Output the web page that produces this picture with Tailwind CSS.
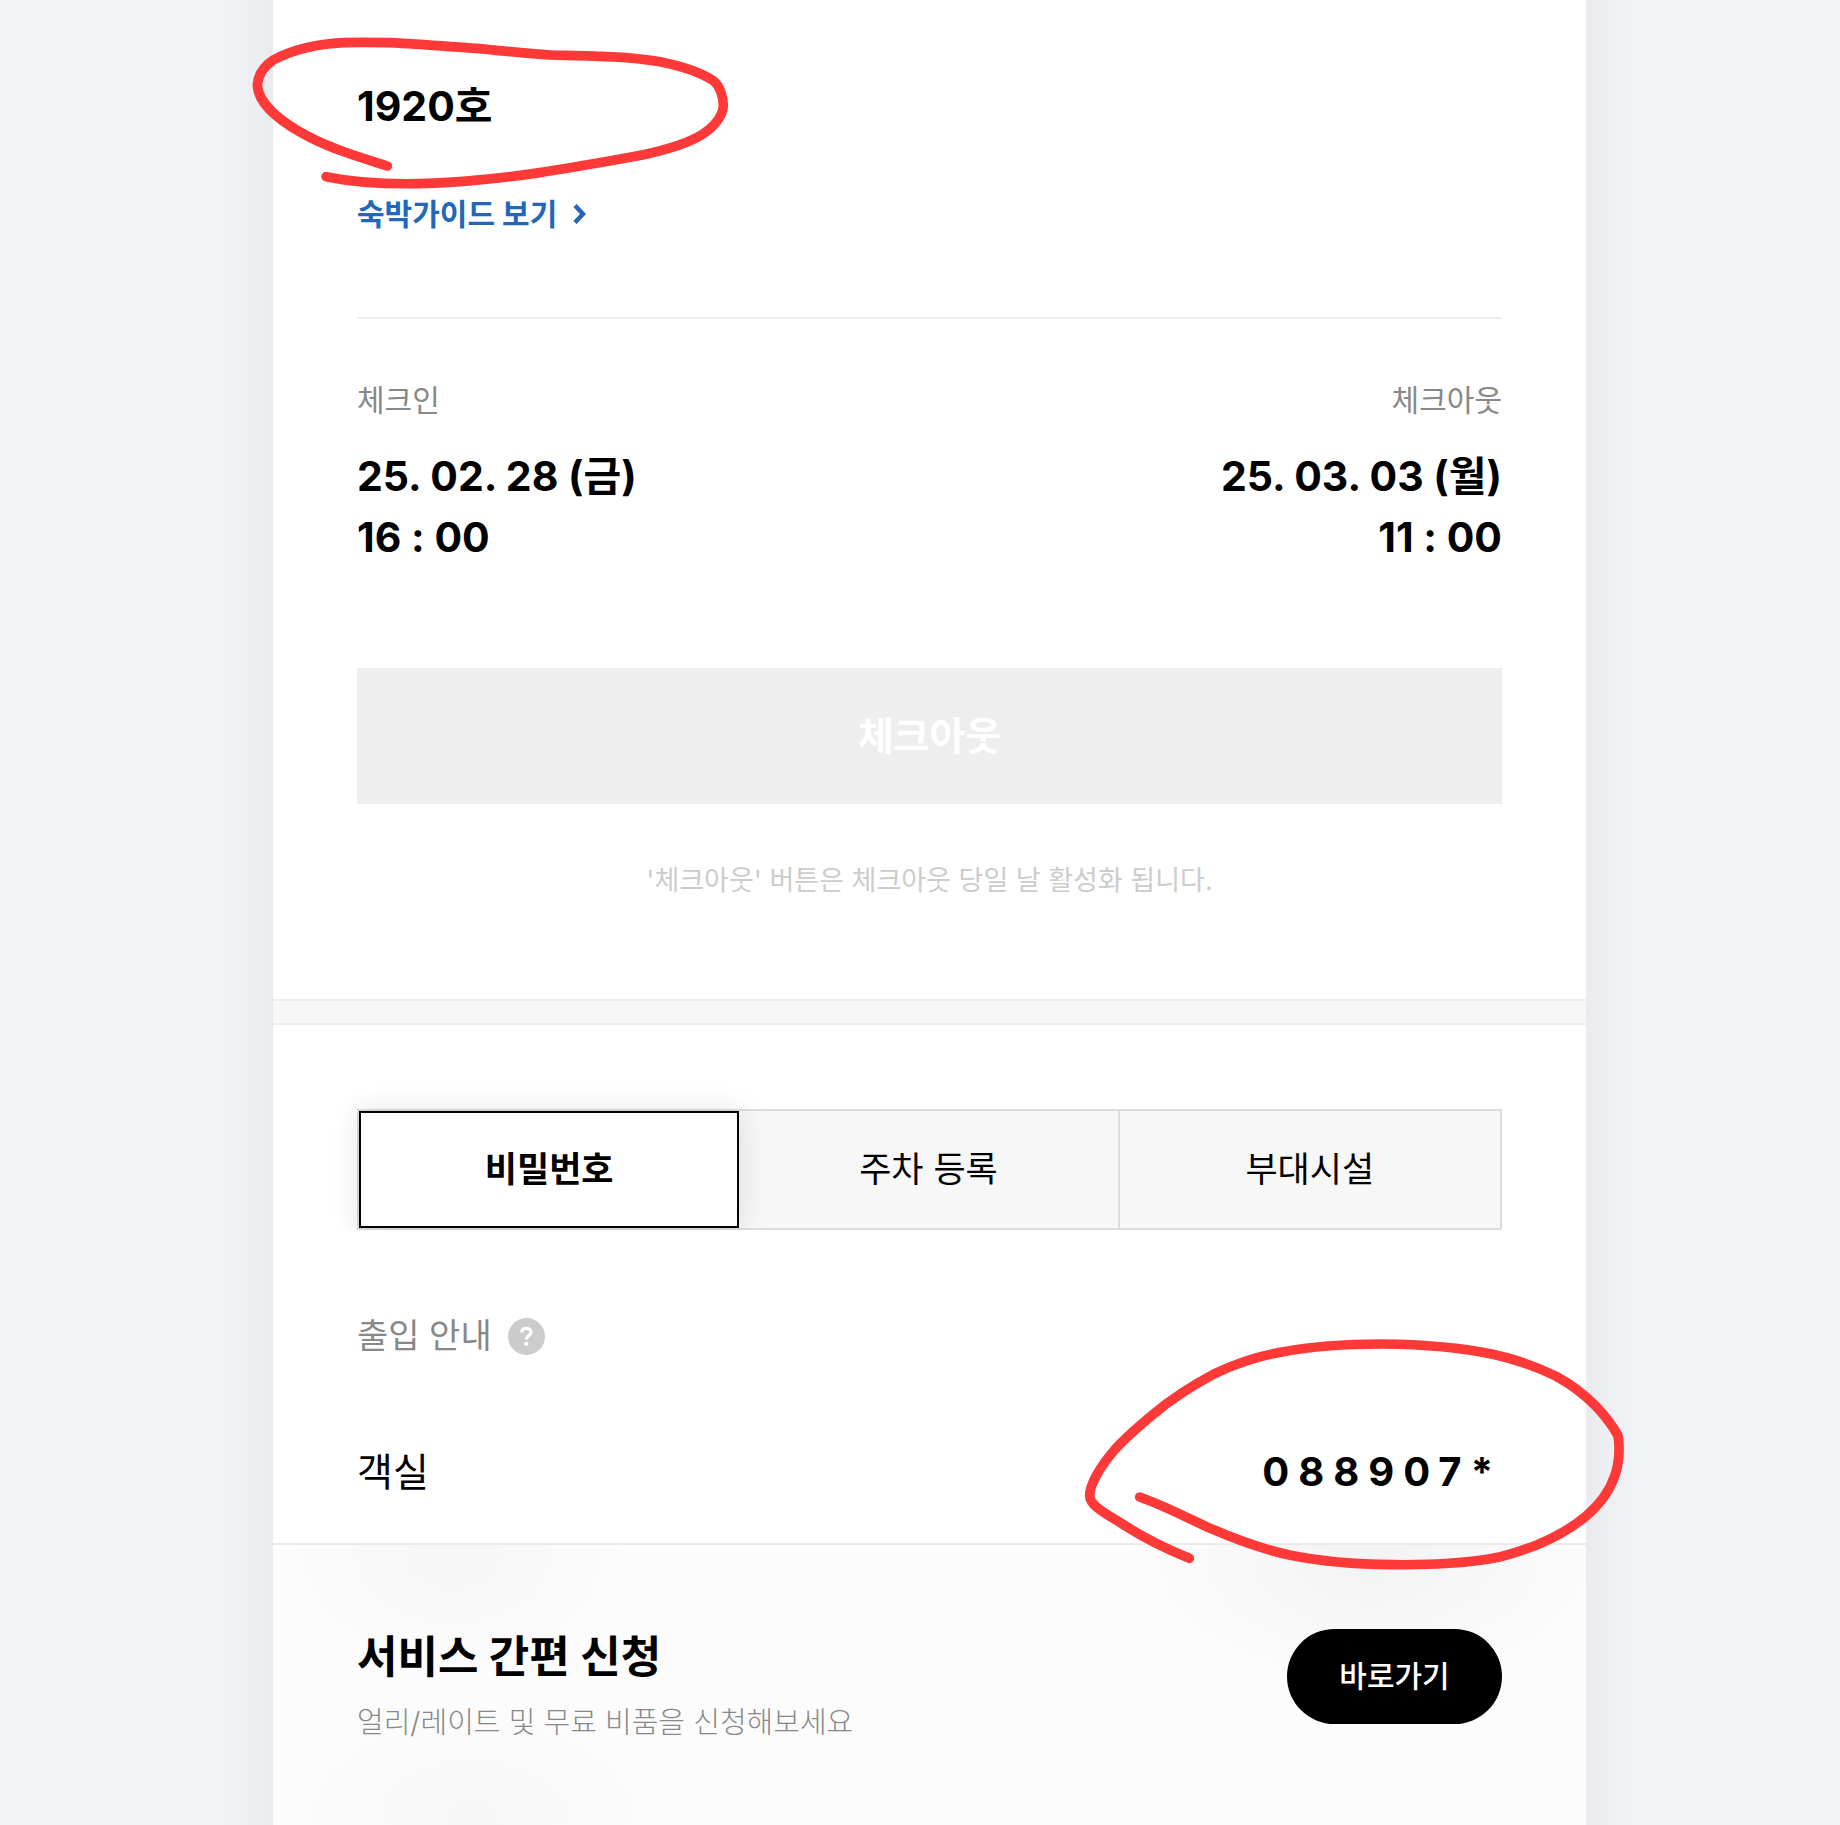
<!DOCTYPE html>
<html lang="ko">
<head>
    <meta charset="UTF-8" />
    <meta name="viewport" content="width=device-width, initial-scale=1" />
    <title>숙박 안내</title>
    <script src="https://cdn.jsdelivr.net/npm/@tailwindcss/browser@4"></script>
    <style>
        body {
            font-family: 'Inter', 'Noto Sans CJK KR', sans-serif;
            font-feature-settings: 'calt' 0;
        }
    </style>
</head>
<body class="bg-[#f1f3f7] text-black">

<div class="min-h-screen flex flex-col overflow-hidden">
<!-- runs past the window top and bottom so that the side shadow does not fade -->
<main class="relative flex-grow flex flex-col -my-20 pt-20 ml-[273px] mr-[254px] bg-white shadow-[0_0_60px_rgba(0,0,0,0.07)]">

    <!-- room and stay -->
    <section class="px-[84px] pt-[76px] pb-[98px]">
        <h1 class="text-[41px] leading-[60px] font-bold">1920호</h1>
        <a href="#guide" class="mt-14 flex w-fit items-center gap-4 text-[30px] leading-[44px] font-bold text-[#2267b9]">
            숙박가이드 보기
            <svg class="w-[13px] h-[20px]" viewBox="0 0 13 20" fill="none" stroke="currentColor" stroke-width="4.5" aria-hidden="true">
                <path d="M2 1.5 10 10 2 18.5" />
            </svg>
        </a>

        <hr class="mt-[81px] border-0 h-[2px] bg-[#eeeeee]" />

        <div class="mt-[59px] flex justify-between">
            <div>
                <p class="text-[30px] leading-[44px] text-[#888888]">체크인</p>
                <p class="mt-6 text-[41px] leading-[61px] font-bold">25. 02. 28 (금)<br />16 : 00</p>
            </div>
            <div class="text-right">
                <p class="text-[30px] leading-[44px] text-[#888888]">체크아웃</p>
                <p class="mt-6 text-[41px] leading-[61px] font-bold">25. 03. 03 (월)<br />11 : 00</p>
            </div>
        </div>

        <button type="button" disabled class="mt-[100px] w-full h-[136px] bg-[#eeeeee] text-white text-[39px] font-bold">체크아웃</button>
        <p class="mt-[57px] text-center text-[27px] leading-[40px] text-[#cccccc]">'체크아웃' 버튼은 체크아웃 당일 날 활성화 됩니다.</p>
    </section>

    <div class="h-[26px] border-y-2 border-[#eeeeee] bg-[#f7f7f7]"></div>

    <!-- password / parking / facilities -->
    <section class="px-[84px] pt-[84px] pb-[41px]">
        <div role="tablist" class="grid grid-cols-3 h-[121px] border-2 border-[#dddddd] bg-[#f7f7f7] text-[35px] [clip-path:inset(-40px_-40px_0_-40px)]">
            <button type="button" role="tab" aria-selected="true" class="relative bg-white border-2 border-black font-bold shadow-[0_0_28px_rgba(0,0,0,0.12)]">비밀번호</button>
            <button type="button" role="tab" aria-selected="false" class="border-r-2 border-[#dddddd]">주차 등록</button>
            <button type="button" role="tab" aria-selected="false">부대시설</button>
        </div>

        <div class="mt-[82px] flex items-center gap-4 text-[34px] leading-[48px] text-[#888888]">
            <h2>출입 안내</h2>
            <button type="button" aria-label="도움말" class="w-[37px] h-[37px]">
                <svg class="w-full h-full" viewBox="0 0 37 37" fill="none" aria-hidden="true">
                    <circle cx="18.5" cy="18.5" r="18.5" fill="#cccccc" />
                    <path d="M13.6 14.5C13.9 11.6 16 10.4 18.4 10.4C21 10.4 23 11.8 23 14.2C23 17.6 18.3 17.4 18.3 21.6" stroke="#ffffff" stroke-width="3.2" />
                    <circle cx="18.2" cy="25.8" r="2.1" fill="#ffffff" />
                </svg>
            </button>
        </div>

        <div class="relative mt-[82px] flex items-center justify-between leading-[60px]">
            <span class="text-[39px]">객실</span>
            <strong class="text-[40px] font-bold tracking-[9px]">088907*</strong>
            <svg class="absolute z-10 -right-[138px] -top-[122px] w-[580px] h-[270px] pointer-events-none" viewBox="0 0 1740 810" fill="none" stroke="#ff3838" stroke-width="29" stroke-linecap="round" stroke-linejoin="round" aria-hidden="true">
                <path d="M388 715C310 683 250 652 200 620C140 582 90 558 89 528C88 495 120 440 165 388C195 355 235 320 277 285C340 232 400 195 466 160C530 130 595 108 666 96C760 78 860 72 966 72C1080 73 1200 82 1299 103C1375 120 1440 145 1487 168C1535 194 1575 225 1609 260C1640 293 1658 318 1674 347C1680 380 1678 430 1664 468C1650 510 1618 555 1576 590C1530 628 1490 650 1432 674C1385 692 1345 706 1299 715C1200 733 1100 735 999 734C890 733 780 724 688 705C600 686 520 655 444 622C370 588 310 556 239 531" />
            </svg>
        </div>
    </section>

    <!-- service request -->
    <section class="flex-grow px-[84px] pt-[84px] pb-20 border-t-2 border-[#eaeaea] bg-[#fcfcfc] bg-[radial-gradient(ellipse_170px_120px_at_180px_10px,#f6f6f6,transparent),radial-gradient(ellipse_230px_120px_at_1100px_20px,#f3f3f3,transparent),radial-gradient(ellipse_190px_110px_at_200px_270px,#f7f7f7,transparent)]">
        <div class="flex items-start justify-between">
            <div>
                <h2 class="text-[44px] leading-[56px] font-bold">서비스 간편 신청</h2>
                <p class="mt-4 text-[29px] leading-[44px] font-light text-[#888888]">얼리/레이트 및 무료 비품을 신청해보세요</p>
            </div>
            <button type="button" class="w-[215px] h-[95px] rounded-full bg-black text-white text-[30px] font-medium">바로가기</button>
        </div>
    </section>

    <!-- pen mark round the room number -->
    <svg class="absolute z-10 -left-[43px] top-[100px] w-[520px] h-[320px] pointer-events-none" viewBox="0 0 1560 960" fill="none" stroke="#ff3838" stroke-width="29" stroke-linecap="round" stroke-linejoin="round" aria-hidden="true">
        <path d="M472 438C390 412 310 388 240 352C150 306 84 250 82 195C84 165 100 140 130 120C190 88 260 72 340 68C390 66 430 67 480 68C570 73 650 79 740 85C820 92 890 102 960 105C1080 108 1180 108 1290 125C1370 141 1420 162 1450 182C1470 198 1480 230 1480 258C1478 290 1450 325 1405 350C1350 380 1280 397 1200 412C1030 442 870 472 700 484C560 495 420 497 288 470" />
    </svg>
</main>
</div>

</body>
</html>
